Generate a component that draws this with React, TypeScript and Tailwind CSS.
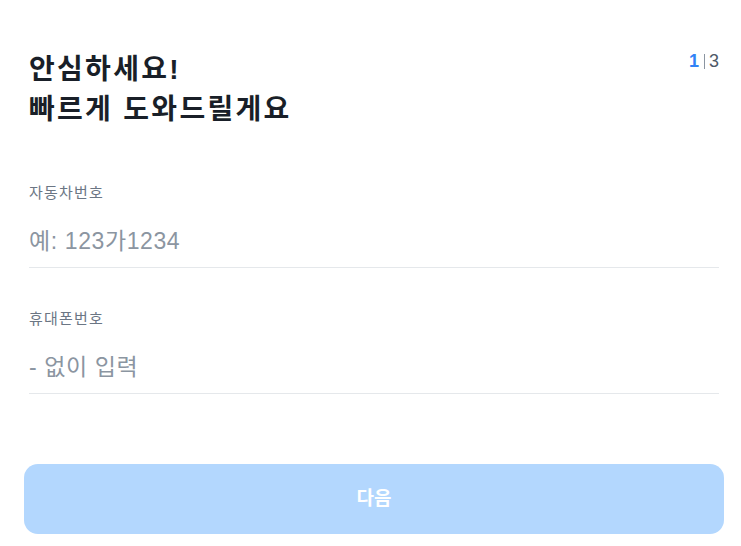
import React, { useState } from 'react';

const font = { fontFamily: '"Liberation Sans", "Noto Sans CJK KR", sans-serif' };

interface FieldProps {
  label: string;
  placeholder: string;
  value: string;
  onChange: (v: string) => void;
  className?: string;
}

const Field: React.FC<FieldProps> = ({ label, placeholder, value, onChange, className }) => (
  <label className={`block ${className ?? ''}`}>
    <span className="block text-[15px] leading-[20px] tracking-[1.2px] text-[#6b7684]">{label}</span>
    <input
      value={value}
      onChange={(e) => onChange(e.target.value)}
      placeholder={placeholder}
      className="mt-[12px] block h-[53px] w-full border-b border-[#e5e8eb] bg-transparent text-[23px] tracking-[0.6px] text-[#191f28] outline-none placeholder:text-[#8b95a1]"
    />
  </label>
);

export default function App() {
  const [car, setCar] = useState('');
  const [phone, setPhone] = useState('');
  const ready = car.length > 0 && phone.length > 0;

  return (
    <div className="min-h-screen bg-white pl-[24px] pr-[17px]" style={font}>
      <div className="px-[5px]">
        {/* header */}
        <div className="flex items-start justify-between pt-[50px]">
          <h1 className="text-[28px] font-bold leading-[40px] tracking-[2.3px] text-[#191f28]">
            안심하세요!
            <br />
            빠르게 도와드릴게요
          </h1>
          <div className="flex items-center text-[18px] leading-[22px]">
            <span className="font-bold text-[#3182f6]">1</span>
            <span className="ml-[5px] mr-[4px] h-[15px] w-px bg-[#8b95a1]"></span>
            <span className="text-[#4e5968]">3</span>
          </div>
        </div>

        <Field label="자동차번호" placeholder="예: 123가1234" value={car} onChange={setCar} className="mt-[53px]" />
        <Field label="휴대폰번호" placeholder="- 없이 입력" value={phone} onChange={setPhone} className="mt-[41px]" />
      </div>

      <button
        className={`mt-[70px] flex h-[70px] w-full items-center justify-center rounded-[14px] text-[19px] font-bold text-white ${
          ready ? 'bg-[#3182f6]' : 'bg-[#b3d7fe]'
        }`}
      >
        다음
      </button>
    </div>
  );
}
